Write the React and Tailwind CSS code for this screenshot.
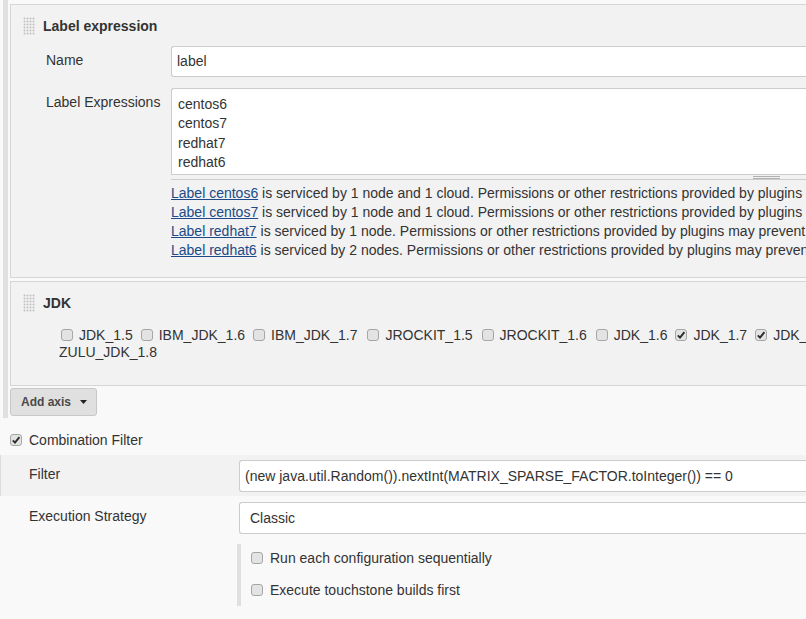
import React from "react";

function Grip() {
  const dots = [];
  for (let c = 0; c < 4; c++) {
    for (let r = 0; r < 6; r++) {
      dots.push(<rect key={c + "-" + r} x={c * 3 + 0.5} y={r * 3 + 0.5} width="2" height="2" fill="#bdbdbd" />);
    }
  }
  return (
    <svg width="12" height="18" viewBox="0 0 12 18" className="shrink-0">
      <rect width="12" height="18" fill="#ffffff" />
      {dots}
    </svg>
  );
}

function Box({ checked }) {
  return (
    <span className="inline-flex shrink-0 w-[12px] h-[12px] rounded-[3px] border border-[#a6a6a6] bg-[#e3e3e3] items-center justify-center">
      {checked ? (
        <svg width="10" height="10" viewBox="0 0 10 10">
          <path d="M1.8 5.4 L4 7.6 L8.4 2.2" fill="none" stroke="#2b2b2b" strokeWidth="1.9" />
        </svg>
      ) : null}
    </span>
  );
}

function Item({ label, checked, ml }) {
  return (
    <span className={"inline-flex items-center " + ml}>
      <Box checked={checked} />
      <span className="ml-[6px]">{label}</span>
    </span>
  );
}

const links = [
  ["Label centos6", " is serviced by 1 node and 1 cloud. Permissions or other restrictions provided by plugins may prevent this job from running on those nodes."],
  ["Label centos7", " is serviced by 1 node and 1 cloud. Permissions or other restrictions provided by plugins may prevent this job from running on those nodes."],
  ["Label redhat7", " is serviced by 1 node. Permissions or other restrictions provided by plugins may prevent this job from running on those nodes."],
  ["Label redhat6", " is serviced by 2 nodes. Permissions or other restrictions provided by plugins may prevent this job from running on those nodes."],
];

export default function App() {
  return (
    <div className="w-[806px] h-[619px] overflow-hidden bg-[#f9f9f9] text-[14px] text-[#333] font-['Liberation_Sans',Arial,sans-serif]">
      <div className="flex">
        <div className="ml-[3px] w-[5px] bg-[#e0e0e0] shrink-0" />
        <div className="ml-[2px] flex-1 min-w-0 pt-[4px] pb-[2px]">
          <div className="border border-r-0 border-[#d6d6d6] bg-[#f2f2f2] pt-[11px] pb-[17px]">
            <div className="flex items-center h-[20px] pl-[12px] gap-[8px]">
              <Grip />
              <span className="font-bold">Label expression</span>
            </div>
            <div className="mt-[10px] pl-[35px] grid grid-cols-[125px_1fr] gap-y-[11px]">
              <div className="pt-[5px] leading-[18px]">Name</div>
              <div className="h-[31px] bg-white border border-r-0 border-[#cccccc] rounded-l-[3px] flex items-center pl-[5px]">label</div>
              <div className="pt-[5px] leading-[18px] whitespace-nowrap">Label Expressions</div>
              <div className="min-w-0">
                <div className="h-[87px] bg-white border border-r-0 border-[#cccccc] rounded-tl-[3px] pt-[6px] pl-[6px] leading-[19.4px]">
                  <div>centos6</div>
                  <div>centos7</div>
                  <div>redhat7</div>
                  <div>redhat6</div>
                </div>
                <div className="h-[5px] border-b border-[#cccccc] bg-[#f2f2f2]">
                  <div className="ml-[582px] w-[27px] h-[4px] pt-[1px]">
                    <div className="h-[3px] border-t border-b border-[#b0b0b0]" />
                  </div>
                </div>
                <div className="mt-[4px] leading-[19px] whitespace-nowrap overflow-hidden">
                  {links.map(([a, b]) => (
                    <div key={a}>
                      <a className="text-[#204a87] underline" href="#">{a}</a>
                      <span>{b}</span>
                    </div>
                  ))}
                </div>
              </div>
            </div>
          </div>

          <div className="mt-[3px] border border-r-0 border-[#d6d6d6] bg-[#f2f2f2] pt-[11px] pb-[24px]">
            <div className="flex items-center h-[20px] pl-[12px] gap-[8px]">
              <Grip />
              <span className="font-bold">JDK</span>
            </div>
            <div className="mt-[13px] pl-[48px]">
              <div className="flex items-center whitespace-nowrap overflow-hidden leading-[18px]">
                <Item ml="ml-[2px]" label="JDK_1.5" />
                <Item ml="ml-[8px]" label="IBM_JDK_1.6" />
                <Item ml="ml-[8px]" label="IBM_JDK_1.7" />
                <Item ml="ml-[10px]" label="JROCKIT_1.5" />
                <Item ml="ml-[9px]" label="JROCKIT_1.6" />
                <Item ml="ml-[9px]" label="JDK_1.6" />
                <Item ml="ml-[8px]" label="JDK_1.7" checked />
                <Item ml="ml-[8px]" label="JDK_1.8" checked />
                <Item ml="ml-[8px]" label="" />
              </div>
              <div className="leading-[18px] -mt-[1px]">ZULU_JDK_1.8</div>
            </div>
          </div>

          <div className="mt-[2px] inline-flex items-center h-[28px] w-[87px] pl-[10px] border border-[#c8c8c8] bg-[#e0e0e0] rounded-[3px] text-[12px] font-bold text-[#4a4a4a]">
            <span>Add axis</span>
            <svg width="7" height="4" viewBox="0 0 7 4" className="ml-[9px]">
              <path d="M0 0 L7 0 L3.5 4 Z" fill="#222" />
            </svg>
          </div>
        </div>
      </div>

      <div className="h-[37px] pt-[13px] pl-[10px]">
        <div className="flex items-center leading-[18px]">
          <Box checked />
          <span className="ml-[7px]">Combination Filter</span>
        </div>
      </div>

      <div className="h-[41px] bg-[#f2f2f2] border-l border-[#dcdcdc] pt-[5px] grid grid-cols-[238px_1fr]">
        <div className="pl-[28px] pt-[5px] leading-[18px]">Filter</div>
        <div className="h-[32px] bg-white border border-r-0 border-[#cccccc] rounded-l-[3px] flex items-center pl-[5px] whitespace-nowrap overflow-hidden">
          (new java.util.Random()).nextInt(MATRIX_SPARSE_FACTOR.toInteger()) == 0
        </div>
      </div>

      <div className="mt-[6px] grid grid-cols-[239px_1fr]">
        <div className="pl-[29px] pt-[5px] leading-[18px]">Execution Strategy</div>
        <div className="h-[32px] bg-white border border-r-0 border-[#cccccc] rounded-l-[3px] flex items-center pl-[10px]">Classic</div>
      </div>

      <div className="mt-[10px] ml-[237px] border-l-[4px] border-[#e0e0e0] pl-[10px] pt-[5px] pb-[7px] leading-[18px]">
        <div className="flex items-center">
          <Box />
          <span className="ml-[7px]">Run each configuration sequentially</span>
        </div>
        <div className="mt-[14px] flex items-center">
          <Box />
          <span className="ml-[7px]">Execute touchstone builds first</span>
        </div>
      </div>
    </div>
  );
}
